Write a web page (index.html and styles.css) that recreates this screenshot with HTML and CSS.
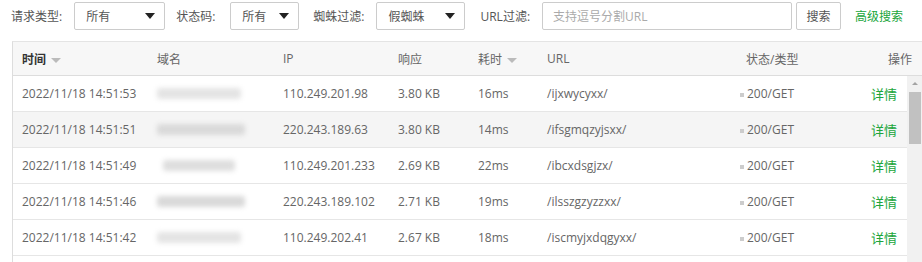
FILE: index.html
```html
<!DOCTYPE html>
<html>
<head>
  <meta charset="utf-8">
  <title>网站日志</title>
  <link rel="stylesheet" href="styles.css">
</head>
<body>
  <div class="toolbar">
    <span class="label">请求类型:</span>
    <div class="select sel-type"><span>所有</span><i class="caret"></i></div>
    <span class="label code-label">状态码:</span>
    <div class="select sel-code"><span>所有</span><i class="caret"></i></div>
    <span class="label">蜘蛛过滤:</span>
    <div class="select sel-spider"><span>假蜘蛛</span><i class="caret"></i></div>
    <span class="label">URL过滤:</span>
    <input class="url-input" type="text" placeholder="支持逗号分割URL">
    <button class="btn">搜索</button>
    <a class="adv-link">高级搜索</a>
  </div>

  <div class="table-box">
    <table class="log-head">
      <colgroup>
        <col class="c-time"><col class="c-domain"><col class="c-ip"><col class="c-size">
        <col class="c-cost"><col class="c-url"><col class="c-status"><col>
      </colgroup>
      <tr>
        <th class="strong">时间 <i class="sort"></i></th>
        <th>域名</th>
        <th>IP</th>
        <th>响应</th>
        <th>耗时 <i class="sort"></i></th>
        <th>URL</th>
        <th>状态/类型</th>
        <th class="right">操作</th>
      </tr>
    </table>

    <div class="body-wrap">
      <table class="log-body">
        <colgroup>
          <col class="c-time"><col class="c-domain"><col class="c-ip"><col class="c-size">
          <col class="c-cost"><col class="c-url"><col class="c-status"><col>
        </colgroup>
        <tr>
          <td>2022/11/18 14:51:53</td>
          <td><span class="blur b1"></span></td>
          <td>110.249.201.98</td>
          <td>3.80 KB</td>
          <td>16ms</td>
          <td>/ijxwycyxx/</td>
          <td><i class="dot"></i>200/GET</td>
          <td class="right"><a class="link">详情</a></td>
        </tr>
        <tr class="hover">
          <td>2022/11/18 14:51:51</td>
          <td><span class="blur b2"></span></td>
          <td>220.243.189.63</td>
          <td>3.80 KB</td>
          <td>14ms</td>
          <td>/ifsgmqzyjsxx/</td>
          <td><i class="dot"></i>200/GET</td>
          <td class="right"><a class="link">详情</a></td>
        </tr>
        <tr>
          <td>2022/11/18 14:51:49</td>
          <td><span class="blur b3"></span></td>
          <td>110.249.201.233</td>
          <td>2.69 KB</td>
          <td>22ms</td>
          <td>/ibcxdsgjzx/</td>
          <td><i class="dot"></i>200/GET</td>
          <td class="right"><a class="link">详情</a></td>
        </tr>
        <tr>
          <td>2022/11/18 14:51:46</td>
          <td><span class="blur b2"></span></td>
          <td>220.243.189.102</td>
          <td>2.71 KB</td>
          <td>19ms</td>
          <td>/ilsszgzyzzxx/</td>
          <td><i class="dot"></i>200/GET</td>
          <td class="right"><a class="link">详情</a></td>
        </tr>
        <tr>
          <td>2022/11/18 14:51:42</td>
          <td><span class="blur b1"></span></td>
          <td>110.249.202.41</td>
          <td>2.67 KB</td>
          <td>18ms</td>
          <td>/iscmyjxdqgyxx/</td>
          <td><i class="dot"></i>200/GET</td>
          <td class="right"><a class="link">详情</a></td>
        </tr>
      </table>
      <div class="scrollbar">
        <i class="arrow-up"></i>
        <div class="thumb"></div>
      </div>
    </div>
  </div>
</body>
</html>
```

FILE: styles.css
```css
body {
  margin: 0;
  font-family: "Open Sans", "Noto Sans CJK SC", sans-serif;
  font-size: 12px;
  color: #666;
  background-color: #fff;
  overflow: hidden;
}

.toolbar {
  display: flex;
  align-items: center;
  height: 32px;
  padding-left: 11px;
}

.label {
  color: #555;
  margin-right: 12px;
}

.code-label {
  margin-right: 15px;
}

.select {
  display: flex;
  align-items: center;
  justify-content: space-between;
  box-sizing: border-box;
  height: 28px;
  padding: 0 9px 0 11px;
  border: 1px solid #ccc;
  border-radius: 2px;
  color: #555;
  margin-right: 11px;
}

.sel-type { width: 91px; }
.sel-code { width: 69px; margin-right: 14px; }
.sel-spider { width: 89px; margin-right: 15px; }

.caret {
  width: 0;
  height: 0;
  border-left: 5px solid transparent;
  border-right: 5px solid transparent;
  border-top: 6px solid #222;
}

.url-input {
  box-sizing: border-box;
  width: 250px;
  height: 28px;
  padding: 0 10px;
  border: 1px solid #ccc;
  border-radius: 2px;
  font-family: inherit;
  font-size: 12px;
  outline: none;
}

.url-input::placeholder {
  color: #aaa;
}

.btn {
  box-sizing: border-box;
  height: 28px;
  width: 45px;
  margin-left: 4px;
  padding: 0;
  border: 1px solid #ccc;
  border-radius: 2px;
  background-color: #fff;
  color: #555;
  font-family: inherit;
  font-size: 12px;
}

.adv-link {
  margin-left: 14px;
  color: #20a53a;
}

.table-box {
  margin: 9px 0 0 12px;
  border-left: 1px solid #ddd;
  border-top: 1px solid #e4e4e4;
}

table {
  border-collapse: collapse;
  table-layout: fixed;
}

.log-head {
  width: 100%;
  background-color: #f7f7f7;
}

.log-head th {
  height: 33px;
  padding: 0 10px 0 9px;
  text-align: left;
  font-weight: normal;
  color: #666;
  border-bottom: 1px solid #ddd;
}

.log-head th.strong {
  font-weight: bold;
  color: #333;
}

.sort {
  display: inline-block;
  width: 0;
  height: 0;
  margin-left: 2px;
  vertical-align: middle;
  border-left: 5px solid transparent;
  border-right: 5px solid transparent;
  border-top: 5px solid #bbb;
}

.c-time { width: 135px; }
.c-domain { width: 126px; }
.c-ip { width: 115px; }
.c-size { width: 80px; }
.c-cost { width: 69px; }
.c-url { width: 199px; }
.c-status { width: 100px; }

.right { text-align: right !important; }

.body-wrap {
  display: flex;
  align-items: flex-start;
  height: 190px;
}

.log-body {
  width: 894px;
  flex: none;
}

.log-body td {
  height: 35px;
  padding: 0 10px 0 9px;
  border-bottom: 1px solid #e6e6e6;
  white-space: nowrap;
  overflow: hidden;
}

.log-body tr.hover td {
  background-color: #f5f5f5;
}

.dot {
  display: inline-block;
  width: 4px;
  height: 4px;
  margin: 0 3px 0 -6px;
  vertical-align: middle;
  background-color: #ccc;
}

.link {
  color: #20a53a;
  font-size: 13px;
}

.blur {
  display: block;
  height: 11px;
  border-radius: 3px;
  background-color: #dcdcdc;
  filter: blur(2.5px);
}

.b1 { width: 84px; background-color: #e4e4e4; }
.b2 { width: 88px; background-color: #d9d9d9; }
.b3 { width: 72px; margin-left: 6px; background-color: #dedede; }

.scrollbar {
  position: relative;
  width: 16px;
  height: 190px;
  background-color: #f1f1f1;
}

.arrow-up {
  position: absolute;
  top: 6px;
  left: 5px;
  width: 0;
  height: 0;
  border-left: 3px solid transparent;
  border-right: 3px solid transparent;
  border-bottom: 3px solid #a3a3a3;
}

.thumb {
  position: absolute;
  top: 16px;
  left: 2px;
  width: 12px;
  height: 52px;
  background-color: #c1c1c1;
}
```
